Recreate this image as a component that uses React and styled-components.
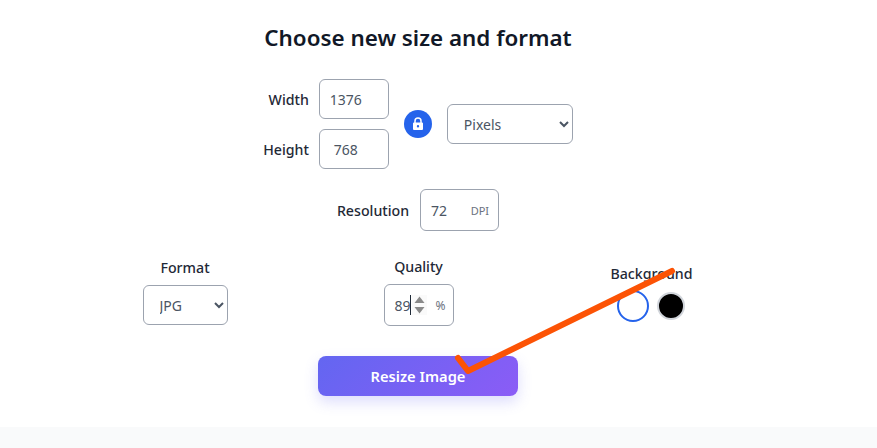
import React from 'react';
import styled, { createGlobalStyle } from 'styled-components';

const GlobalStyle = createGlobalStyle`
  html, body { margin: 0; padding: 0; background: #fff; }
  body { font-family: "Noto Sans", "Open Sans", sans-serif; overflow: hidden; }
`;

const Page = styled.div`
  position: relative;
  width: 877px;
  height: 448px;
  overflow: hidden;
  display: flex;
  flex-direction: column;
`;
const Main = styled.main`
  width: 836px;
  height: 427px;
  display: flex;
  flex-direction: column;
  align-items: center;
`;
const Footer = styled.div`
  height: 21px;
  background: #f9fafb;
`;
const Title = styled.h2`
  margin: 21px 0 0;
  height: 34px;
  font-size: 22.400px;
  line-height: 34px;
  font-weight: 600;
  color: #111827;
`;
const DimensionRow = styled.div`
  margin-top: 24px;
  display: flex;
  align-items: center;
  gap: 15px;
`;
const FieldStack = styled.div`
  display: flex;
  flex-direction: column;
  gap: 10px;
`;
const InlineField = styled.label`
  display: flex;
  align-items: center;
  justify-content: flex-end;
  gap: 10px;
`;
const Label = styled.span`
  margin-top: 2px;
  font-size: 14.200px;
  line-height: 20px;
  font-weight: 500;
  color: #1f2937;
`;
const NumberInput = styled.input`
  box-sizing: border-box;
  width: 70px;
  height: 40px;
  padding: 0 16px 0 0;
  border: 1px solid #9ca3af;
  border-radius: 6px;
  background: #fff;
  font: 400 14px "Noto Sans", sans-serif;
  color: #4b5563;
  text-align: center;
  outline: none;
`;
const LockButton = styled.button`
  width: 28px;
  height: 28px;
  padding: 0;
  border: 0;
  border-radius: 50%;
  background: #2563eb;
  display: flex;
  align-items: center;
  justify-content: center;
`;
const Select = styled.select`
  box-sizing: border-box;
  width: ${p => p.$width}px;
  height: 40px;
  padding: 0 0 0 12px;
  border: 1px solid #9ca3af;
  border-radius: 6px;
  background: #fff;
  font: 400 14px "Noto Sans", sans-serif;
  color: #4b5563;
  outline: none;
`;
const ResolutionRow = styled.div`
  margin-top: 20px;
  display: flex;
  align-items: center;
  gap: 11px;
`;
const SuffixBox = styled.div`
  box-sizing: border-box;
  width: ${p => p.$width}px;
  height: 42px;
  border: 1px solid #9ca3af;
  border-radius: 6px;
  background: #fff;
  display: flex;
  align-items: center;
  font-size: 14px;
  color: #4b5563;
`;
const BoxValue = styled.span`
  margin-left: ${p => p.$left}px;
  width: ${p => p.$width}px;
`;
const Caret = styled.span`
  width: 1px;
  height: 20px;
  background: #1f2937;
`;
const Suffix = styled.span`
  margin-left: auto;
  margin-right: ${p => p.$right}px;
  font-size: ${p => p.$size}px;
  color: #6b7280;
`;
const Spinner = styled.svg`
  display: block;
  margin-left: 1px;
  background: #fafafa;
`;
const OptionsRow = styled.div`
  margin-top: 25px;
  display: grid;
  grid-template-columns: 235px 232px 234px;
`;
const OptionColumn = styled.div`
  height: 73px;
  display: flex;
  flex-direction: column;
  align-items: center;
  justify-content: flex-start;
`;
const OptionLabel = styled(Label)`
  margin-top: ${p => p.$top}px;
  margin-bottom: ${p => p.$bottom}px;
`;
const Swatches = styled.div`
  display: flex;
  align-items: center;
  gap: 8px;
  margin-right: 2px;
`;
const Swatch = styled.span`
  box-sizing: border-box;
  width: ${p => p.$size}px;
  height: ${p => p.$size}px;
  border-radius: 50%;
  background: ${p => p.$color};
  border: 2px solid ${p => p.$ring};
`;
const ResizeButton = styled.button`
  margin-top: 27px;
  width: 200px;
  height: 40px;
  border: 0;
  border-radius: 8px;
  background: linear-gradient(135deg, #6366f1, #8b5cf6);
  box-shadow: 0 6px 14px rgba(99, 102, 241, 0.22);
  color: #fff;
  font: 600 14.700px "Noto Sans", sans-serif;
`;
const Annotation = styled.svg`
  position: absolute;
  left: 0;
  top: 0;
  pointer-events: none;
`;

export default function App() {
  return (
    <Page>
      <GlobalStyle />
      <Main>
        <Title>Choose new size and format</Title>
        <DimensionRow>
          <FieldStack>
            <InlineField>
              <Label>Width</Label>
              <NumberInput readOnly value="1376" />
            </InlineField>
            <InlineField>
              <Label>Height</Label>
              <NumberInput readOnly value="768" />
            </InlineField>
          </FieldStack>
          <LockButton aria-label="Lock aspect ratio">
            <svg width="12" height="14" viewBox="0 0 12 14">
              <path d="M3 6V4a3 3 0 0 1 6 0v2" fill="none" stroke="#fff" strokeWidth="1.5" />
              <path fillRule="evenodd" fill="#fff" d="M2 5.5h8a1 1 0 0 1 1 1V12a1 1 0 0 1-1 1H2a1 1 0 0 1-1-1V6.500a1 1 0 0 1 1-1zM6 8a1.200 1.200 0 1 0 0 2.400A1.200 1.200 0 0 0 6 8z" />
            </svg>
          </LockButton>
          <Select $width={126} defaultValue="Pixels">
            <option>Pixels</option>
            <option>Percent</option>
          </Select>
        </DimensionRow>
        <ResolutionRow>
          <Label>Resolution</Label>
          <SuffixBox $width={79}>
            <BoxValue $left={10} $width={16}>72</BoxValue>
            <Suffix $right={9} $size={11}>DPI</Suffix>
          </SuffixBox>
        </ResolutionRow>
        <OptionsRow>
          <OptionColumn>
            <OptionLabel $top={2} $bottom={7}>Format</OptionLabel>
            <Select $width={85} defaultValue="JPG">
              <option>JPG</option>
              <option>PNG</option>
              <option>WEBP</option>
            </Select>
          </OptionColumn>
          <OptionColumn>
            <OptionLabel $top={1} $bottom={7}>Quality</OptionLabel>
            <SuffixBox $width={70}>
              <BoxValue $left={10} $width={15}>89</BoxValue>
              <Caret />
              <Spinner width="15" height="20" viewBox="0 0 15 20">
                <path d="M7.500 1.500 12.500 8h-10z" fill="#8a8a8a" />
                <path d="M7.500 18.500 12.500 12h-10z" fill="#8a8a8a" />
              </Spinner>
              <Suffix $right={7} $size={12}>%</Suffix>
            </SuffixBox>
          </OptionColumn>
          <OptionColumn>
            <OptionLabel $top={8} $bottom={6}>Background</OptionLabel>
            <Swatches>
              <Swatch $size={32} $color="#fff" $ring="#2563eb" />
              <Swatch $size={28} $color="#000" $ring="#d1d5db" />
            </Swatches>
          </OptionColumn>
        </OptionsRow>
        <ResizeButton>Resize Image</ResizeButton>
      </Main>
      <Footer />
      <Annotation width="877" height="448" viewBox="0 0 877 448">
        <polyline points="672,271 468,371 458,358" fill="none" stroke="#fc5305" strokeWidth="6" strokeLinecap="round" strokeLinejoin="round" />
      </Annotation>
    </Page>
  );
}
